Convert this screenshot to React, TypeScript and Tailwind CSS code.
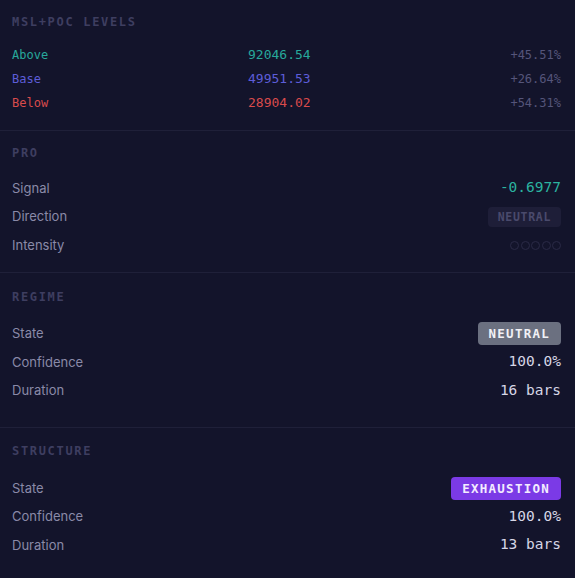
import React from 'react';

interface Level {
  label: string;
  value: string;
  pct: string;
  color: string;
}

interface StatRow {
  label: string;
  value: string;
  badge?: string;
}

const mono = { fontFamily: '"DejaVu Sans Mono", "Liberation Mono", monospace' };

const levels: Level[] = [
  { label: 'Above', value: '92046.54', pct: '+45.51%', color: 'text-[#27a89b]' },
  { label: 'Base', value: '49951.53', pct: '+26.64%', color: 'text-[#5d5dd8]' },
  { label: 'Below', value: '28904.02', pct: '+54.31%', color: 'text-[#d94b4b]' },
];

const regime: StatRow[] = [
  { label: 'State', value: 'NEUTRAL', badge: 'bg-[#6b7080] text-[#f1f1f6]' },
  { label: 'Confidence', value: '100.0%' },
  { label: 'Duration', value: '16 bars' },
];

const structure: StatRow[] = [
  { label: 'State', value: 'EXHAUSTION', badge: 'bg-[#7b3ae6] text-[#f3ecff]' },
  { label: 'Confidence', value: '100.0%' },
  { label: 'Duration', value: '13 bars' },
];

const SectionTitle: React.FC<{ children: React.ReactNode }> = ({ children }) => (
  <div
    className="h-[17px] leading-[17px] text-[12px] font-bold tracking-[0.14em] text-[#3e3e60]"
    style={mono}
  >
    {children}
  </div>
);

const StatRows: React.FC<{ rows: StatRow[] }> = ({ rows }) => (
  <div className="flex flex-col">
    {rows.map((row) => (
      <div key={row.label} className="flex h-[28.5px] items-center justify-between">
        <span className="text-[13px] text-[#8a8aa8]">{row.label}</span>
        {row.badge ? (
          <span
            className={`h-[23px] rounded-[4px] px-[11px] text-[12.5px] font-bold leading-[23px] tracking-[0.1em] ${row.badge}`}
            style={mono}
          >
            {row.value}
          </span>
        ) : (
          <span className="text-[14.5px] text-[#d6d6e6]" style={mono}>
            {row.value}
          </span>
        )}
      </div>
    ))}
  </div>
);

export default function App() {
  return (
    <div
      className="min-h-[578px] w-full bg-[#13142b]"
      style={{ fontFamily: 'Inter, "Noto Sans", sans-serif' }}
    >
      {/* MSL + POC levels */}
      <section className="border-b border-[#1f2039] pl-3 pr-[14px] pt-[14px] pb-[15px]">
        <SectionTitle>MSL+POC LEVELS</SectionTitle>
        <div className="mt-3 flex flex-col">
          {levels.map((lv) => (
            <div key={lv.label} className="grid h-6 grid-cols-[236px_1fr_auto] items-center" style={mono}>
              <span className={`text-[12px] ${lv.color}`}>{lv.label}</span>
              <span className={`text-[13px] ${lv.color}`}>{lv.value}</span>
              <span className="text-[12px] text-[#55557a]">{lv.pct}</span>
            </div>
          ))}
        </div>
      </section>

      {/* PRO */}
      <section className="border-b border-[#1f2039] pl-3 pr-[14px] pt-[14px] pb-[12.5px]">
        <SectionTitle>PRO</SectionTitle>
        <div className="mt-3 flex flex-col">
          <div className="flex h-[28.5px] items-center justify-between">
            <span className="text-[13px] text-[#8a8aa8]">Signal</span>
            <span className="text-[14.5px] text-[#2bb3a0]" style={mono}>
              -0.6977
            </span>
          </div>
          <div className="flex h-[28.5px] items-center justify-between">
            <span className="text-[13px] text-[#8a8aa8]">Direction</span>
            <span
              className="h-5 rounded-[4px] bg-[#1e1e38] px-[10px] text-[11.5px] font-semibold leading-5 tracking-[0.06em] text-[#4a4a6c]"
              style={mono}
            >
              NEUTRAL
            </span>
          </div>
          <div className="flex h-[28.5px] items-center justify-between">
            <span className="text-[13px] text-[#8a8aa8]">Intensity</span>
            <div className="flex gap-[1.5px]">
              {[0, 1, 2, 3, 4].map((i) => (
                <span key={i} className="h-[9px] w-[9px] rounded-full border border-[#2a2a46]" />
              ))}
            </div>
          </div>
        </div>
      </section>

      {/* Regime */}
      <section className="border-b border-[#1f2039] pl-3 pr-[14px] pt-[15.5px] pb-[21.5px]">
        <SectionTitle>REGIME</SectionTitle>
        <div className="mt-[14px]">
          <StatRows rows={regime} />
        </div>
      </section>

      {/* Structure */}
      <section className="pl-3 pr-[14px] pt-[15.5px] pb-5">
        <SectionTitle>STRUCTURE</SectionTitle>
        <div className="mt-[14px]">
          <StatRows rows={structure} />
        </div>
      </section>
    </div>
  );
}
